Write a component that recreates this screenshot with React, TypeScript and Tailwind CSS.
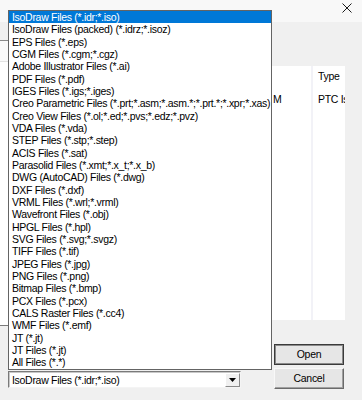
import React from "react";

const items = [
  "IsoDraw Files (*.idr;*.iso)",
  "IsoDraw Files (packed) (*.idrz;*.isoz)",
  "EPS Files (*.eps)",
  "CGM Files (*.cgm;*.cgz)",
  "Adobe Illustrator Files (*.ai)",
  "PDF Files (*.pdf)",
  "IGES Files (*.igs;*.iges)",
  "Creo Parametric Files (*.prt;*.asm;*.asm.*;*.prt.*;*.xpr;*.xas)",
  "Creo View Files (*.ol;*.ed;*.pvs;*.edz;*.pvz)",
  "VDA Files (*.vda)",
  "STEP Files (*.stp;*.step)",
  "ACIS Files (*.sat)",
  "Parasolid Files (*.xmt;*.x_t;*.x_b)",
  "DWG (AutoCAD) Files (*.dwg)",
  "DXF Files (*.dxf)",
  "VRML Files (*.wrl;*.vrml)",
  "Wavefront Files (*.obj)",
  "HPGL Files (*.hpl)",
  "SVG Files (*.svg;*.svgz)",
  "TIFF Files (*.tif)",
  "JPEG Files (*.jpg)",
  "PNG Files (*.png)",
  "Bitmap Files (*.bmp)",
  "PCX Files (*.pcx)",
  "CALS Raster Files (*.cc4)",
  "WMF Files (*.emf)",
  "JT (*.jt)",
  "JT Files (*.jt)",
  "All Files (*.*)",
];

const font = "font-['Liberation_Sans',Arial,sans-serif] text-[10.5px] tracking-[-0.3px] text-black";

export default function App() {
  return (
    <div className={`relative w-[362px] h-[400px] overflow-hidden bg-[#f0f0f0] ${font}`}>
      {/* title bar */}
      <div className="h-[22px] bg-[#f8f8f8] flex justify-end items-start pt-[3px] pr-[10px]">
        <svg width="10" height="10" viewBox="0 0 10 10">
          <path d="M0.5 0.5 L9.5 9.5 M9.5 0.5 L0.5 9.5" stroke="#1a1a1a" strokeWidth="1" fill="none" />
        </svg>
      </div>

      {/* body */}
      <div className="flex flex-row h-[378px]">
        {/* left column (behind popup) */}
        <div className="w-[272px] shrink-0 flex flex-col">
          <div className="h-[18px]" />
          <div className="h-[1px] bg-[#8a8a8a]" />
          <div className="h-[20px] bg-[#fafafa]" />
          <div className="h-[1px] bg-[#e3e3e3]" />
          <div className="h-[263px] bg-white" />
          <div className="h-[1px] bg-[#7a7a7a]" />
          <div className="h-[45px]" />
          {/* combo box */}
          <div className="ml-[8px] w-[233px] h-[17px] flex border-t border-l border-[#7a7a7a] border-b border-r border-b-[#f4f4f4] border-r-[#f4f4f4]">
            <div className="flex-1 flex border-t border-l border-[#c8c8c8] bg-white">
              <div className="flex-1 flex items-center pl-[2px] leading-[14px]">IsoDraw Files (*.idr;*.iso)</div>
              <div className="w-[15px] h-full flex items-center justify-center bg-[#f0f0f0] border-t border-l border-[#ffffff] border-b border-r border-b-[#8a8a8a] border-r-[#8a8a8a]">
                <svg width="7" height="4" viewBox="0 0 7 4">
                  <path d="M0 0 H7 L3.5 4 Z" fill="#000" />
                </svg>
              </div>
            </div>
          </div>
        </div>

        {/* right column */}
        <div className="w-[90px] shrink-0 min-w-0 flex flex-col">
          <div className="h-[44px]" />
          <div className="h-[254px] w-[73px] flex flex-row bg-white">
            <div className="w-[39px] shrink-0 flex flex-col">
              <div className="h-[22px]" />
              <div className="h-[24px] flex items-center pl-[1px]">M</div>
            </div>
            <div className="w-[2px] shrink-0 bg-[#f2f2f7]" />
            <div className="w-[32px] shrink-0 flex flex-col overflow-hidden whitespace-nowrap">
              <div className="h-[22px] flex items-center pl-[5px]">Type</div>
              <div className="h-[24px] flex items-center pl-[5px]">PTC IsoDraw</div>
            </div>
          </div>
          <div className="h-[24px]" />
          <div className="ml-[2px] w-[70px] flex flex-col gap-[3px]">
            <div className="h-[21px] flex items-center justify-center bg-[#e6e6e6] border border-[#3a3a3a] shadow-[inset_0_0_0_1px_#8a8a8a]">
              Open
            </div>
            <div className="h-[21px] flex items-center justify-center bg-[#e6e6e6] border-t border-l border-[#f8f8f8] border-b border-r border-b-[#6a6a6a] border-r-[#6a6a6a] shadow-[inset_-1px_-1px_0_#a0a0a0]">
              Cancel
            </div>
          </div>
        </div>
      </div>

      {/* popup list */}
      <div className="absolute left-[8px] top-[10px] w-[264px] border border-[#646464] bg-white flex flex-col whitespace-nowrap overflow-hidden">
        {items.map((t, i) => (
          <div
            key={t}
            className={`h-[12.33px] leading-[12.33px] pl-[3px] ${i === 0 ? "bg-[#0078d7] text-white" : ""}`}
          >
            {t}
          </div>
        ))}
      </div>
    </div>
  );
}
